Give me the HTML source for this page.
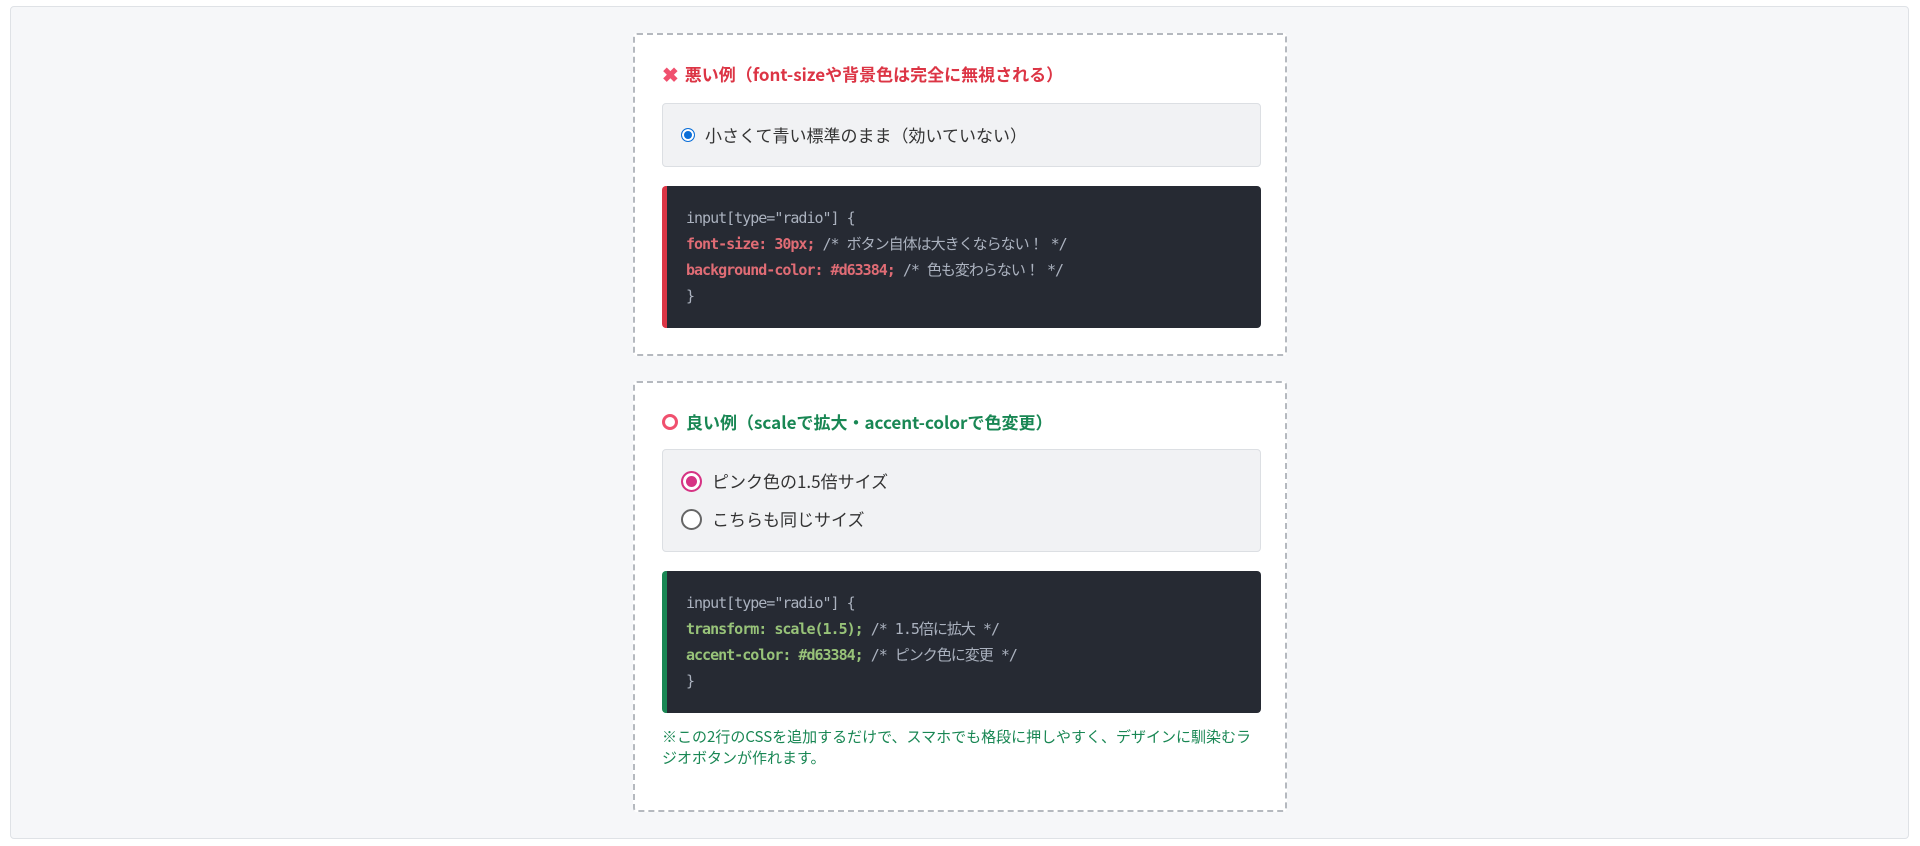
<!DOCTYPE html>
<html><head><meta charset="utf-8"><style>
*{box-sizing:border-box}
body{margin:0;width:1920px;height:846px;background:#fff;font-family:"Noto Sans CJK JP","Liberation Sans",sans-serif;}
.outer{position:absolute;left:10px;top:6px;width:1899px;height:833px;background:#f6f7f9;border:1px solid #dfe2e6;border-radius:4px}
.box{position:absolute;left:633px;width:654px;background:#fff;border:2px dashed #b5b9bf;border-radius:4px;padding:0 25px}
.title{font-weight:bold;font-size:17px;display:flex;align-items:center;gap:6px;position:absolute;left:27px;line-height:24px}
.gray{position:absolute;left:27px;width:599px;background:#f1f2f4;border:1px solid #dcdfe3;border-radius:4px}
.row{position:absolute;left:18px;display:flex;align-items:center;font-size:17px;color:#333;line-height:24px}
.code{position:absolute;left:27px;width:599px;background:#262a33;border-radius:4px;padding:19px 0 0 19px;font-family:"DejaVu Sans Mono","Noto Sans CJK JP",monospace;font-size:15px;line-height:26px;color:#abb2bf;letter-spacing:-1px}
.code.r{border-left:5px solid #dc3545}
.code.g{border-left:5px solid #198754}
.rd{color:#e06c75;font-weight:bold}.gn{color:#98c379;font-weight:bold}
</style></head><body>
<div class="outer"></div>
<div class="box" style="top:33px;height:323px">
 <div class="title" style="top:27px;color:#dc3545"><span style="color:#f0506e;font-size:20px">✖</span>悪い例（font-sizeや背景色は完全に無視される）</div>
 <div class="gray" style="top:68px;height:64px">
  <div class="row" style="top:19px"><span style="width:14px;height:14px;border-radius:50%;border:1px solid #0b6fd8;box-shadow:inset 0 0 0 2px #fff;background:#0b6fd8;margin-right:10px;display:inline-block"></span>小さくて青い標準のまま（効いていない）</div>
 </div>
 <div class="code r" style="top:151px;height:142px">input[type="radio"] {<br><span class="rd">font-size: 30px;</span> /* ボタン自体は大きくならない！ */<br><span class="rd">background-color: #d63384;</span> /* 色も変わらない！ */<br>}</div>
</div>
<div class="box" style="top:381px;height:431px">
 <div class="title" style="top:27px;color:#198754"><span style="display:inline-block;width:16px;height:16px;border-radius:50%;border:3px solid #f0506e;margin-right:2px"></span>良い例（scaleで拡大・accent-colorで色変更）</div>
 <div class="gray" style="top:66px;height:103px">
  <div class="row" style="top:19px"><span style="width:21px;height:21px;border-radius:50%;border:2px solid #d63384;box-shadow:inset 0 0 0 3px #fff;background:#d63384;margin-right:10px;display:inline-block"></span>ピンク色の1.5倍サイズ</div>
  <div class="row" style="top:57px"><span style="width:21px;height:21px;border-radius:50%;border:2px solid #666;background:#fff;margin-right:10px;display:inline-block"></span>こちらも同じサイズ</div>
 </div>
 <div class="code g" style="top:188px;height:142px">input[type="radio"] {<br><span class="gn">transform: scale(1.5);</span> /* 1.5倍に拡大 */<br><span class="gn">accent-color: #d63384;</span> /* ピンク色に変更 */<br>}</div>
 <div style="position:absolute;top:343px;left:27px;width:600px;font-size:15px;line-height:21px;color:#198754">※この2行のCSSを追加するだけで、スマホでも格段に押しやすく、デザインに馴染むラジオボタンが作れます。</div>
</div>
</body></html>
